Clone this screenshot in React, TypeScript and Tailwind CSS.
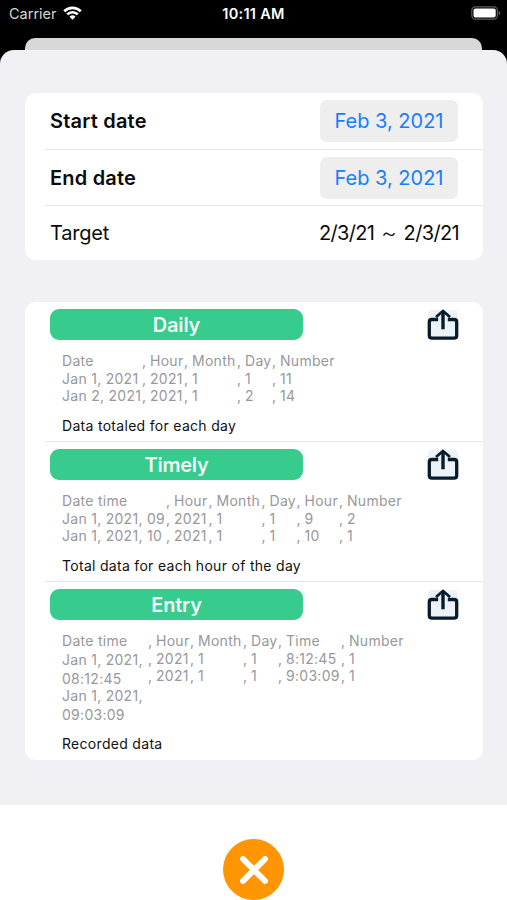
import clsx from 'clsx'

interface Column {
  width: string
  cells: string[]
}

interface ExportItem {
  id: string
  title: string
  description: string
  columns: Column[]
}

const exportItems: ExportItem[] = [
  {
    id: 'daily',
    title: 'Daily',
    description: 'Data totaled for each day',
    columns: [
      { width: 'w-20', cells: ['Date', 'Jan 1, 2021', 'Jan 2, 2021'] },
      { width: 'w-[34px]', cells: ['Hour', '2021', '2021'] },
      { width: 'w-[45px]', cells: ['Month', '1', '1'] },
      { width: 'w-[27px]', cells: ['Day', '1', '2'] },
      { width: 'w-16', cells: ['Number', '11', '14'] },
    ],
  },
  {
    id: 'timely',
    title: 'Timely',
    description: 'Total data for each hour of the day',
    columns: [
      { width: 'w-[104px]', cells: ['Date time', 'Jan 1, 2021, 09', 'Jan 1, 2021, 10'] },
      { width: 'w-[34.5px]', cells: ['Hour', '2021', '2021'] },
      { width: 'w-[45px]', cells: ['Month', '1', '1'] },
      { width: 'w-[27px]', cells: ['Day', '1', '1'] },
      { width: 'w-[34.5px]', cells: ['Hour', '9', '10'] },
      { width: 'w-16', cells: ['Number', '2', '1'] },
    ],
  },
  {
    id: 'entry',
    title: 'Entry',
    description: 'Recorded data',
    columns: [
      { width: 'w-[86px]', cells: ['Date time', 'Jan 1, 2021,\n08:12:45', 'Jan 1, 2021,\n09:03:09'] },
      { width: 'w-[34px]', cells: ['Hour', '2021', '2021'] },
      { width: 'w-[45px]', cells: ['Month', '1', '1'] },
      { width: 'w-[27px]', cells: ['Day', '1', '1'] },
      { width: 'w-[55px]', cells: ['Time', '8:12:45', '9:03:09'] },
      { width: 'w-16', cells: ['Number', '1', '1'] },
    ],
  },
]

function StatusBar() {
  return (
    <div className="grid h-[38px] shrink-0 grid-cols-3 items-start bg-black text-white">
      <div className="flex items-center pt-1 pl-[9px]">
        <span className="text-[14.5px] leading-5 text-[#d6d6d6]">Carrier</span>
        <svg className="ml-[6px] -mt-[3px] h-[14px] w-[19px]" viewBox="0 0 19 14" fill="none" stroke="#fff" strokeWidth="2.7">
          <path d="M1.2 5.2a11.8 11.8 0 0 1 16.6 0" />
          <path d="M4.2 8.4a7.6 7.6 0 0 1 10.6 0" />
          <path d="M9.5 13.8 6.5 10.8a4.3 4.3 0 0 1 6 0z" fill="#fff" stroke="none" />
        </svg>
      </div>
      <div className="pt-1 text-center text-[14.5px] leading-5 font-semibold tracking-[0.3px]">10:11 AM</div>
      <div className="flex justify-end pt-[6px] pr-[6px]">
        <svg className="h-[14px] w-[30px]" viewBox="0 0 30 14" fill="none">
          <rect x="0.8" y="0.8" width="25.6" height="12.4" rx="3.6" stroke="#5e5e5e" strokeWidth="1.2" />
          <rect x="2.5" y="2.5" width="22.2" height="9" rx="2" fill="#fff" />
          <path d="M27.6 4.9q1.8.6 1.8 2.1t-1.8 2.1z" fill="#5e5e5e" />
        </svg>
      </div>
    </div>
  )
}

function DateRow({ label, value }: { label: string; value: string }) {
  return (
    <div className="ml-5 flex h-[56.5px] items-center justify-between border-b border-[#e8e8ea] pr-[25px] pl-[5px]">
      <span className="pt-px text-[20px] font-semibold tracking-[0.2px]">{label}</span>
      <button className="mt-px h-[42px] w-[138px] rounded-[7px] bg-[#eeeeef] text-[20px] text-[#157efb]">
        {value}
      </button>
    </div>
  )
}

function ShareIcon() {
  return (
    <svg className="h-[31px] w-8" viewBox="0 0 32 31" fill="none" stroke="#071b2b">
      <rect x="1" y="1" width="30" height="29" rx="4" fill="#edf2f6" stroke="none" />
      <path d="M11.2 10.5H5Q2.3 10.5 2.3 13v13.4q0 2.7 2.7 2.7h22q2.7 0 2.7-2.7V13q0-2.5-2.7-2.5h-6.2" strokeWidth="3.3" />
      <path d="M16 20.3V3" strokeWidth="3.4" />
      <path d="M9 8 16 2l7 6" strokeWidth="2.8" />
    </svg>
  )
}

function SampleTable({ columns }: { columns: Column[] }) {
  return (
    <div className="flex text-[14px] leading-[17.5px] tracking-[0.28px] whitespace-pre text-[#98989a]">
      {columns.map((column, i) => (
        <div key={i} className="flex">
          {i > 0 && (
            <div className="w-2">
              {column.cells.map((_, row) => (
                <div key={row}>,</div>
              ))}
            </div>
          )}
          <div className={column.width}>
            {column.cells.map((cell, row) => (
              <div
                key={row}
                className={clsx(cell.includes('\n') && 'h-[36.7px] leading-[19px]')}
              >
                {cell}
              </div>
            ))}
          </div>
        </div>
      ))}
    </div>
  )
}

function ExportRow({ item, last }: { item: ExportItem; last: boolean }) {
  return (
    <div className={clsx('ml-5 pl-[5px]', last ? 'h-[178px]' : 'h-[140px] border-b border-[#e8e8ea]')}>
      <div className="flex items-start justify-between pt-[7px] pr-6">
        <div className="h-[31px] w-[253px] rounded-[9px] bg-[#37cb8e] text-center text-[20px] leading-[32px] font-semibold tracking-[-0.2px] text-white/95">
          {item.title}
        </div>
        <button aria-label="Share">
          <ShareIcon />
        </button>
      </div>
      <div className="pt-[12px] pl-3">
        <SampleTable columns={item.columns} />
        <p className="mt-3 text-[14px] leading-[18px] tracking-[0.3px] text-[#111]">{item.description}</p>
      </div>
    </div>
  )
}

export default function App() {
  return (
    <div className="flex h-[900px] w-full flex-col overflow-hidden bg-white font-['Inter',sans-serif] text-[#0b0b0b]">
      <StatusBar />
      <div className="h-3 shrink-0 bg-black px-[25px]">
        <div className="h-3 rounded-t-[10px] bg-[#d8d8d8]" />
      </div>
      <div className="shrink-0 bg-black">
        <main className="h-[755px] rounded-t-[14px] bg-[#f0f0f5] pt-[43px] pr-6 pl-[25px]">
          <section className="h-[167px] rounded-[11px] bg-white">
            <DateRow label="Start date" value="Feb 3, 2021" />
            <DateRow label="End date" value="Feb 3, 2021" />
            <div className="flex h-[54px] items-center justify-between pr-6 pl-[25px] text-[20px] tracking-[-0.2px]">
              <span>Target</span>
              <span className="tracking-[-0.65px]">2/3/21 ～ 2/3/21</span>
            </div>
          </section>

          <section className="mt-[42px] h-[458px] rounded-[11px] bg-white">
            {exportItems.map((item, i) => (
              <ExportRow key={item.id} item={item} last={i === exportItems.length - 1} />
            ))}
          </section>
        </main>
      </div>

      <footer className="flex justify-center pt-[34px]">
        <button aria-label="Close" className="flex size-[61px] items-center justify-center rounded-full bg-[#ff9500]">
          <svg className="size-[30px]" viewBox="0 0 30 30" stroke="#fff" strokeWidth="6" strokeLinecap="round">
            <path d="M4 4l22 22M26 4l-22 22" />
          </svg>
        </button>
      </footer>
    </div>
  )
}
